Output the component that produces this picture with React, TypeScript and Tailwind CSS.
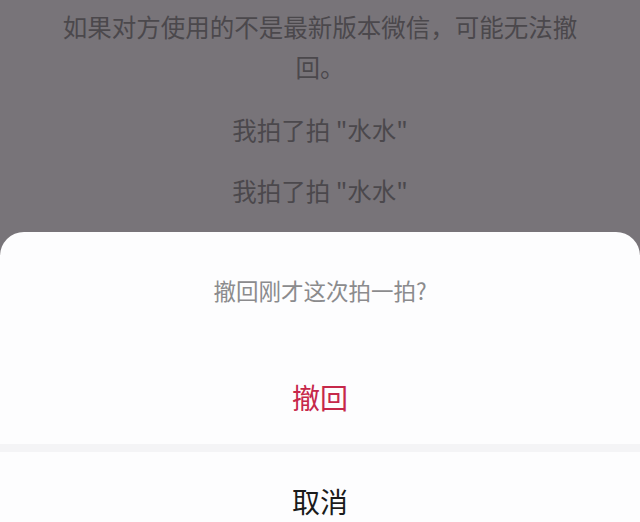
import React from 'react';

const font = { fontFamily: '"Noto Sans CJK SC", "Noto Sans", sans-serif' };

function ChatBackdrop() {
  return (
    <div className="h-[232px] shrink-0 bg-[#787479] flex flex-col items-center text-[#4b484c] text-[24.5px]">
      <p className="mt-[7px] leading-[40px] text-center">
        如果对方使用的不是最新版本微信，可能无法撤
        <br />
        回。
      </p>
      <p className="mt-[23px] leading-[40px]">我拍了拍 "水水"</p>
      <p className="mt-[21px] leading-[40px]">我拍了拍 "水水"</p>
    </div>
  );
}

function ActionSheet() {
  return (
    <div className="flex-1 shrink-0 bg-[#787479]">
      <div className="bg-[#fdfdfe] rounded-t-[24px] flex flex-col">
        <div className="h-[118px] flex items-center justify-center text-[22.5px] text-[#8b8b8d]">
          撤回刚才这次拍一拍?
        </div>
        <button className="h-[94px] flex items-center justify-center text-[28px] text-[#c6284a]">
          撤回
        </button>
        <div className="h-[8px] bg-[#f4f4f6]" />
        <button className="h-[98px] flex items-center justify-center text-[28px] text-[#1b1b1b]">
          取消
        </button>
      </div>
    </div>
  );
}

export default function App() {
  return (
    <div className="w-[640px] h-[522px] overflow-hidden flex flex-col" style={font}>
      <ChatBackdrop />
      <ActionSheet />
    </div>
  );
}
